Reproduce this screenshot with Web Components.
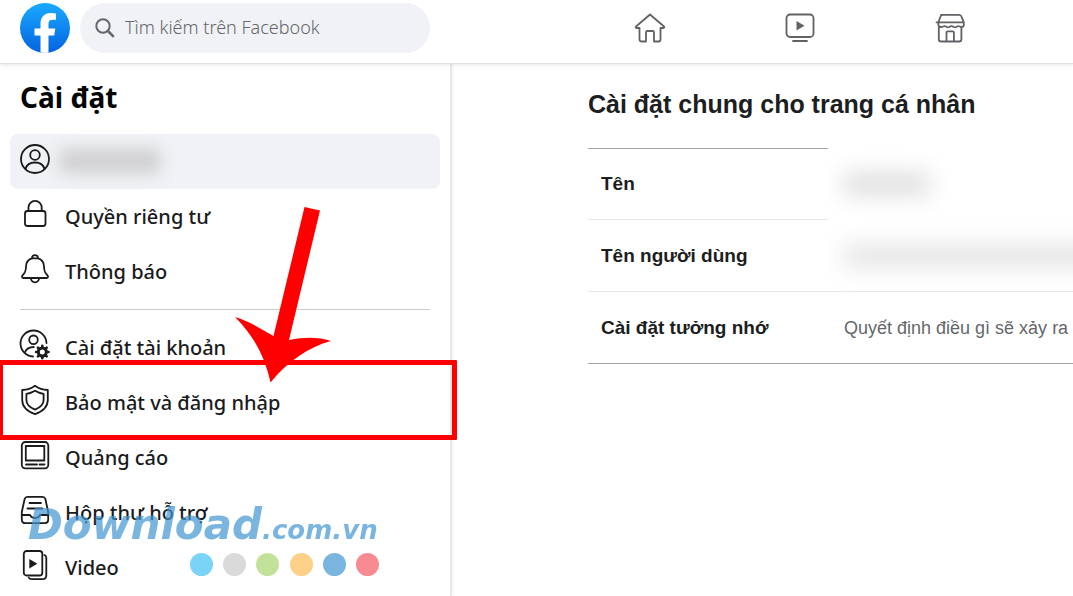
<!DOCTYPE html>
<html lang="vi">
<head>
<meta charset="utf-8">
<meta name="viewport" content="width=device-width, initial-scale=1">
<title>Cài đặt</title>
<style>
  body { margin: 0; background: #fff; color: #1c1e21; font-family: "Noto Sans", "Open Sans", sans-serif; }
</style>
</head>
<body>
<settings-app></settings-app>

<script>
const define = (name, html) => customElements.define(name, class extends HTMLElement {
  constructor() {
    super();
    this.attachShadow({ mode: 'open' }).innerHTML = html;
  }
});

/* Line icons, drawn on a 30 by 30 grid */
const ICONS = {
  user: '<circle cx="15" cy="15" r="14"/><circle cx="15" cy="11" r="4.8"/><path d="M5.6 25c1-4.2 4.5-6.5 9.4-6.5s8.400 2.300 9.400 6.500"/>',
  lock: '<rect x="5" y="12" width="20.500" height="15" rx="2.500"/><path d="M8.500 12V8.500a6.600 6.600 0 0 1 13.200 0V12"/>',
  bell: '<path d="M12 4.300C12 2 13 1.200 15 1.200S18 2 18 4.300c4 1.300 6 4 6 8.200 0 5 1 6.500 3.600 9 .9 1 .4 2.500-1 2.500H3.400c-1.400 0-1.900-1.500-1-2.500C5 19 6 17.500 6 12.500c0-4.200 2-6.900 6-8.200zM12 4.300h6M10.800 24c.3 2.800 2 4.300 4.200 4.300s3.900-1.500 4.200-4.300"/>',
  account: '<path d="M13 26.500A13 13 0 1 1 26.500 13"/><circle cx="13.500" cy="9.800" r="4.300"/><path d="M4.800 22.500c1.500-3.800 4.500-5.500 9-5.500"/><circle cx="22.300" cy="22" r="4" stroke-width="3"/><path stroke-width="2.600" d="M22.300 15.800v2M22.300 26.200v2M16.100 22h2M26.500 22h2M17.900 17.600l1.400 1.400M25.300 25l1.400 1.400M26.700 17.600l-1.400 1.400M19.300 25l-1.400 1.400"/>',
  shield: '<path d="M15 .8c3.500 2.600 7.500 4 12.800 4.200V15c0 6.500-5.300 11.500-12.800 14.200C7.500 26.500 2.200 21.500 2.200 15V5C7.500 4.800 11.500 3.400 15 .8z"/><path d="M15 5.800c2.600 1.700 5.300 2.600 8.600 3V15c0 4.200-3.200 7.400-8.600 9.700C9.600 22.400 6.400 19.200 6.400 15V8.800c3.300-.4 6-1.300 8.600-3z"/>',
  ads: '<rect x="1.800" y="2" width="26.500" height="26.300" rx="3.500"/><path d="M5.800 6h18.500v14.500H5.800zM6 24.500h11M19.500 24.500h5"/>',
  inbox: '<path d="M7.500 1.800h15c1.600 0 2.400.7 2.800 2L28.200 17v7.500c0 2.400-1.300 3.700-3.700 3.700h-19c-2.400 0-3.700-1.300-3.700-3.700V17L4.700 3.800c.4-1.300 1.200-2 2.800-2zM2 20h8c.8 2 2.500 3 5 3s4.200-1 5-3h8M9.500 8h11.500M7.500 13.500h15"/>',
  video: '<rect x="3.800" y="1" width="18.500" height="24.500" rx="2.800"/><path d="M24.300 5c1.400.5 2 1.400 2 2.800v17.400c0 2.600-1.300 4-3.900 4H12c-1.800 0-2.800-.5-3.300-1.500"/><path fill="currentColor" stroke="none" d="M9.300 9v9.500l8-4.700z"/>',
  home: '<path d="M15 1.500 29 13.500c.6.700.3 1.500-.6 1.500h-2.900v11.500c0 1.300-.7 2-2 2H19v-9c0-1-.5-1.500-1.500-1.500h-5c-1 0-1.500.5-1.500 1.500v9H6.500c-1.300 0-2-.7-2-2V15H1.600c-.9 0-1.200-.8-.6-1.500z"/>',
  watch: '<rect x="1.500" y="1.500" width="27" height="22.500" rx="3.500"/><path d="M8 28h14"/><path fill="currentColor" stroke="none" d="M11.500 8v9.500l8-4.700z"/>',
  shop: '<path d="M6 1.800h18c1.400 0 2.200.6 2.600 2l2.200 5.500V12c0 1.300-1 2-2.300 2-1.300 0-2-.9-3.200-.9s-2 1.300-3.300 1.300-2-1.300-3.300-1.300h-.4c-1.300 0-2 1.300-3.300 1.300s-2-1.300-3.300-1.300-2 .9-3.300.9c-1.800 0-3-.7-3-2V9.300l2-5.500c.4-1.400 1.200-2 2.600-2zM1.500 9.300h27M3.800 14.500v11.700c0 1.500.8 2.300 2.300 2.300h18c1.500 0 2.300-.8 2.300-2.300V14.500M11.500 28v-8.500c0-.8.4-1.200 1.200-1.200h5c.8 0 1.200.4 1.200 1.200V28"/>',
};

customElements.define('line-icon', class extends HTMLElement {
  static observedAttributes = ['name'];
  attributeChangedCallback() {
    if (!this.shadowRoot) this.attachShadow({ mode: 'open' });
    this.shadowRoot.innerHTML = `
      <style>:host { display: block; width: 30px; height: 30px; } svg { display: block; overflow: visible; }</style>
      <svg width="30" height="30" viewBox="0 0 30 30" fill="none" stroke="currentColor" stroke-width="1.800" stroke-linecap="round" stroke-linejoin="round" aria-hidden="true">${ICONS[this.getAttribute('name')]}</svg>`;
  }
});

define('brand-logo', `
  <style>:host { display: block; } a, svg { display: block; }</style>
  <a href="#" aria-label="Facebook">
    <svg width="50" height="50" viewBox="0 0 50 50">
      <defs>
        <linearGradient id="g" x1="0" y1="0" x2="0" y2="1"><stop offset="0" stop-color="#19aaff"/><stop offset="1" stop-color="#0563e0"/></linearGradient>
        <clipPath id="c"><circle cx="25" cy="25" r="25"/></clipPath>
      </defs>
      <g clip-path="url(#c)">
        <path fill="url(#g)" d="M0 0h50v50H0z"/>
        <path fill="#fff" d="M20.500 50V32.500H14.500V25.500h6v-4.500c0-7 3.700-11 10.200-11 2 0 3.800.2 5.300.5v6.300h-3.400c-3 0-4.100 1.600-4.100 4v4.700h6.800l-1.100 7h-5.700V50z"/>
      </g>
    </svg>
  </a>`);

define('search-box', `
  <style>
    :host { display: block; }
    label { display: flex; align-items: center; gap: 10px; height: 50px; padding: 0 15px; box-sizing: border-box; border-radius: 25px; background: #f0f2f5; color: #65676b; }
    svg { flex: none; }
    input { flex: 1; min-width: 0; height: 40px; padding: 0 0 2px; box-sizing: border-box; border: 0; outline: 0; background: none; font: 350 18px "Noto Sans", sans-serif; color: inherit; }
    input::placeholder { color: #65676b; opacity: 1; }
  </style>
  <label>
    <svg width="20" height="20" viewBox="0 0 20 20" fill="none" stroke="currentColor" stroke-width="2" aria-hidden="true"><circle cx="8" cy="8" r="6.700"/><path stroke-width="2.500" d="m13 13 5.800 5.800"/></svg>
    <input type="search" placeholder="Tìm kiếm trên Facebook" aria-label="Tìm kiếm trên Facebook">
  </label>`);

define('top-bar', `
  <style>
    :host { display: block; position: relative; z-index: 1; background: #fff; border-bottom: 1px solid #e2e3e5; box-shadow: 0 1px 4px rgba(0,0,0,.1); }
    header { display: flex; align-items: flex-start; height: 63px; padding: 3px 0 0 20px; box-sizing: border-box; gap: 10px; }
    search-box { width: 350px; }
    nav { flex: 1; display: flex; margin-left: 135px; }
    a { display: flex; justify-content: center; align-items: center; width: 150px; height: 50px; color: #606266; }
  </style>
  <header>
    <brand-logo></brand-logo>
    <search-box></search-box>
    <nav>
      <a href="#" aria-label="Trang chủ"><line-icon name="home"></line-icon></a>
      <a href="#" aria-label="Watch"><line-icon name="watch"></line-icon></a>
      <a href="#" aria-label="Marketplace"><line-icon name="shop"></line-icon></a>
    </nav>
  </header>`);

customElements.define('menu-item', class extends HTMLElement {
  connectedCallback() {
    if (this.shadowRoot) return;
    this.attachShadow({ mode: 'open' }).innerHTML = `
      <style>
        :host { display: block; position: relative; }
        a { display: flex; gap: 15px; height: 55px; padding: 0 10px; border-radius: 8px; color: #1a1b1d; text-decoration: none; font-size: 20px; font-weight: 500; line-height: 55px; white-space: nowrap; }
        line-icon { margin-top: 10px; }
        :host([selected]) a { background: #f0f2f5; }
        :host([marked])::after { content: ""; position: absolute; inset: -15px -17px -10px -12px; border: 5px solid #f00; border-radius: 1px; pointer-events: none; }
      </style>
      <a href="#"><line-icon name="${this.getAttribute('icon')}"></line-icon><slot></slot></a>`;
  }
});

define('hidden-name', `
  <style>
    :host { display: block; }
    i { display: block; width: var(--w, 86px); height: var(--h, 24px); background: var(--c, #e0e0e0); filter: blur(var(--b, 11px)); }
  </style>
  <i></i>`);

define('red-arrow', `
  <style>:host { display: block; position: absolute; left: 235px; top: 143px; pointer-events: none; } svg { display: block; }</style>
  <svg width="97" height="176" viewBox="235 207 97 176" fill="#f00" aria-hidden="true">
    <path d="M304.500 207 320 210.500 289 340C305 337 318 337 331 341 309 347 288 361 270.500 382.500 265 357 254 336 235 317 249 321 261 329 273.500 336z"/>
  </svg>`);

define('site-watermark', `
  <style>
    :host { display: block; position: absolute; left: 28px; top: 436px; color: #4397d2; opacity: .7; pointer-events: none; }
    p { margin: 0; font: italic bold 42px/50px "DejaVu Sans", sans-serif; white-space: nowrap; }
    small { font-size: 26px; }
    div { display: flex; justify-content: space-between; width: 189px; margin: -2px 0 0 162px; }
    i { width: 23px; height: 23px; border-radius: 50%; background: var(--dot); }
  </style>
  <p>Download<small>.com.vn</small></p>
  <div>
    <i style="--dot:#42c2f5"></i><i style="--dot:#cbcbcb"></i><i style="--dot:#a9d770"></i><i style="--dot:#fdbd58"></i><i style="--dot:#4397d2"></i><i style="--dot:#f65a65"></i>
  </div>`);

define('side-menu', `
  <style>
    :host { display: block; position: relative; width: 450px; flex: none; border-right: 2px solid #e9e9ea; box-shadow: 1px 0 3px rgba(0,0,0,.05); }
    h1 { margin: 0; padding: 0 0 4px 20px; font-size: 28px; line-height: 66px; font-weight: 700; color: #050505; }
    nav { padding: 0 10px; }
    hr { height: 1px; margin: 10px 10px; border: 0; background: #c9cbce; }
    hidden-name { --w: 100px; --h: 24px; --c: #cfcfd1; --b: 8px; margin: 15px 0 0 -5px; }
  </style>
  <h1>Cài đặt</h1>
  <nav>
    <menu-item selected icon="user"><hidden-name></hidden-name></menu-item>
    <menu-item icon="lock">Quyền riêng tư</menu-item>
    <menu-item icon="bell">Thông báo</menu-item>
    <hr>
    <menu-item icon="account">Cài đặt tài khoản</menu-item>
    <menu-item icon="shield" marked>Bảo mật và đăng nhập</menu-item>
    <menu-item icon="ads">Quảng cáo</menu-item>
    <menu-item icon="inbox">Hộp thư hỗ trợ</menu-item>
    <menu-item icon="video">Video</menu-item>
  </nav>
  <red-arrow></red-arrow>
  <site-watermark></site-watermark>`);

define('general-settings', `
  <style>
    :host { display: block; flex: 1; min-width: 0; padding-left: 136px; overflow: hidden; font-family: "Liberation Sans", Arial, sans-serif; }
    h2 { margin: 24px 0 28px; font-size: 25px; line-height: 32px; font-weight: 700; color: #1c1e21; white-space: nowrap; }
    table { width: 100%; table-layout: fixed; border-collapse: separate; border-spacing: 0; border-bottom: 1px solid #a2a4a8; }
    th { width: 227px; height: 70px; padding: 1px 0 0 13px; text-align: left; font-size: 19px; color: #1c1e21; white-space: nowrap; border-top: 1px solid #e5e6e9; }
    tr:first-child th { border-top-color: #a2a4a8; padding-top: 0; }
    td { padding: 1px 0 0 16px; font-size: 18px; color: #65676b; white-space: nowrap; }
    tr:last-child td { border-top: 1px solid #e5e6e9; }
    .long { --w: 260px; --c: #e6e6e6; }
  </style>
  <h2>Cài đặt chung cho trang cá nhân</h2>
  <table>
    <tr><th scope="row">Tên</th><td><hidden-name></hidden-name></td></tr>
    <tr><th scope="row">Tên người dùng</th><td><hidden-name class="long"></hidden-name></td></tr>
    <tr><th scope="row">Cài đặt tưởng nhớ</th><td>Quyết định điều gì sẽ xảy ra</td></tr>
  </table>`);

define('settings-app', `
  <style>
    :host { display: flex; flex-direction: column; min-height: 100vh; overflow: hidden; }
    main { flex: 1; display: flex; }
  </style>
  <top-bar></top-bar>
  <main><side-menu></side-menu><general-settings></general-settings></main>`);
</script>
</body>
</html>
